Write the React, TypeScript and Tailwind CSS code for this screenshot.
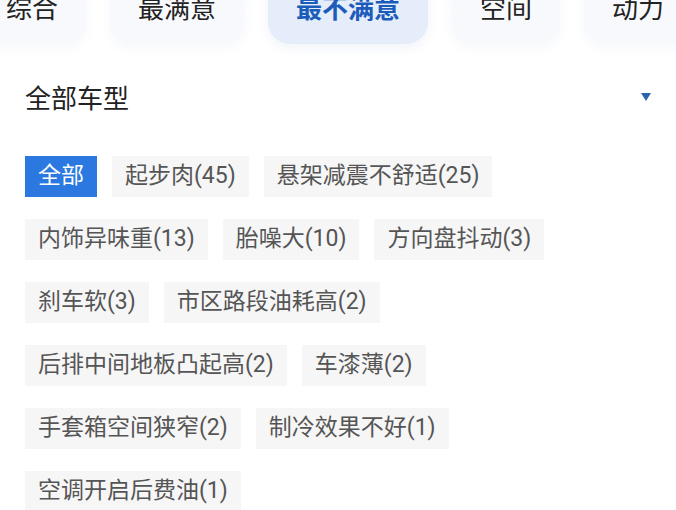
import React from "react";

const tabs = ["综合", "最满意", "最不满意", "空间", "动力"];
const activeTab = 2;

const tags = [
  "全部",
  "起步肉(45)",
  "悬架减震不舒适(25)",
  "内饰异味重(13)",
  "胎噪大(10)",
  "方向盘抖动(3)",
  "刹车软(3)",
  "市区路段油耗高(2)",
  "后排中间地板凸起高(2)",
  "车漆薄(2)",
  "手套箱空间狭窄(2)",
  "制冷效果不好(1)",
  "空调开启后费油(1)",
];

export default function App() {
  return (
    <div
      className="w-[676px] h-[510px] overflow-hidden bg-white"
      style={{ fontFamily: 'Roboto, "Noto Sans CJK SC", sans-serif' }}
    >
      {/* category pills, scrolled horizontally */}
      <div className="-mt-[26px] -ml-[22px] flex gap-[24px] whitespace-nowrap">
        {tabs.map((t, i) => (
          <div
            key={t}
            className={
              i === activeTab
                ? "h-[70px] shrink-0 px-[28px] flex items-center justify-center rounded-[22px] bg-[#e5edfa] text-[26px] font-bold text-[#1b5cbb] shadow-[0_4px_12px_rgba(60,90,150,0.07)]"
                : "h-[70px] shrink-0 px-[28px] flex items-center justify-center rounded-[22px] bg-[#f8f9fc] text-[26px] text-[#222] shadow-[0_4px_12px_rgba(60,90,150,0.05)]"
            }
          >
            {t}
          </div>
        ))}
      </div>

      {/* model selector */}
      <div className="mt-[37px] pl-[25px] pr-[25px] flex items-center justify-between">
        <span className="text-[26px] leading-[36px] text-[#222]">全部车型</span>
        <svg width="10" height="8" viewBox="0 0 10 8" className="-mt-[4px]">
          <path d="M0 0 H10 L5 8 Z" fill="#2d63aa" />
        </svg>
      </div>

      {/* complaint tags */}
      <div className="mt-[39px] pl-[25px] pr-[25px] flex flex-wrap gap-x-[15px] gap-y-[22px]">
        {tags.map((t, i) => (
          <div
            key={t}
            className={
              i === 0
                ? "h-[41px] px-[13px] flex items-center bg-[#2b79e0] text-[23px] text-white"
                : "h-[41px] px-[13px] flex items-center bg-[#f6f6f7] text-[23px] text-[#555]"
            }
          >
            {t}
          </div>
        ))}
      </div>
    </div>
  );
}
